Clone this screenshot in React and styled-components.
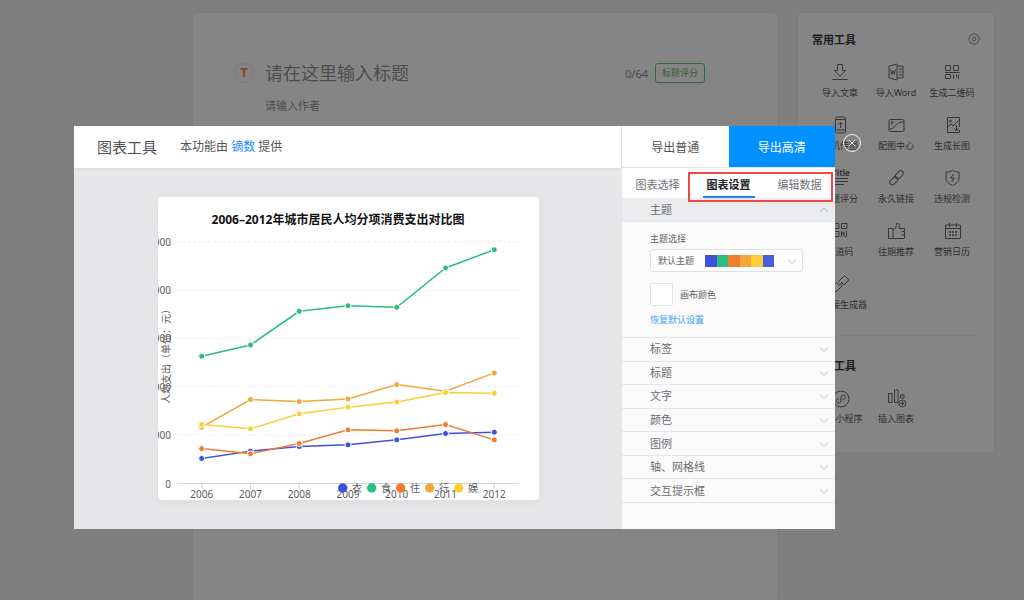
import { useState } from 'react';
import styled, { createGlobalStyle } from 'styled-components';

const GlobalStyle = createGlobalStyle`
  * {
    box-sizing: border-box;
  }

  body {
    margin: 0;
    background: #f3f3f3;
    font-family: 'Noto Sans', 'Noto Sans CJK SC', sans-serif;
    overflow: hidden;
  }

  button, input, select {
    margin: 0;
    padding: 0;
    border: 0;
    background: none;
    font: inherit;
    color: inherit;
  }

  button, select {
    cursor: pointer;
  }
`;

const Page = styled.div`
  display: flex;
  align-items: flex-start;
  gap: 21px;
  min-height: 100vh;
  padding: 13px 30px 0 193px;
`;

const Card = styled.div`
  background: #fff;
  border-radius: 3px;
  box-shadow: 0 0 4px rgba(0, 0, 0, 0.03);
`;

const Editor = styled(Card)`
  flex: 1;
  align-self: stretch;
  padding: 50px 72px 0 41px;
`;

const TitleRow = styled.div`
  display: flex;
  align-items: center;
  height: 20px;
`;

const TitleBadge = styled.div`
  width: 20px;
  height: 20px;
  margin-right: 11px;
  border: 1px solid #eee;
  border-radius: 50%;
  color: #f0a020;
  font: 900 12px/18px Roboto, sans-serif;
  text-align: center;
`;

const TitleInput = styled.input`
  flex: 1;
  min-width: 0;
  height: 28px;
  font-size: 18px;

  &::placeholder {
    color: #969696;
  }
`;

const Count = styled.span`
  margin-right: 7px;
  font-size: 11px;
  color: #8e8e8e;
`;

const ScoreButton = styled.button`
  width: 50px;
  height: 20px;
  border: 1px solid #6fc57c;
  border-radius: 3px;
  color: #5fb86c;
  font-size: 9px;
  line-height: 18px;
`;

const AuthorInput = styled.input`
  display: block;
  height: 20px;
  margin: 12px 0 0 31px;
  font-size: 11px;

  &::placeholder {
    color: #969696;
  }
`;

const Sidebar = styled(Card)`
  width: 196px;
  padding: 13px 14px 19px;
  color: #3c3c3c;
`;

const SidebarHead = styled.div`
  display: flex;
  align-items: center;
  justify-content: space-between;
  height: 28px;
  padding-bottom: 2px;
`;

const SidebarTitle = styled.h2`
  margin: 0;
  font-size: 11px;
  font-weight: 700;
`;

const SettingsButton = styled.button`
  display: flex;
  color: #929292;
`;

const Divider = styled.hr`
  height: 1px;
  margin: 16px 0;
  border: 0;
  background: #f4f4f4;
`;

const ToolGrid = styled.div`
  display: grid;
  grid-template-columns: repeat(3, 1fr);
`;

const ToolButton = styled.button`
  display: flex;
  flex-direction: column;
  align-items: center;
  gap: 5px;
  height: 53px;
  padding-top: 9px;
  font-size: 9px;
  line-height: 14px;
  white-space: nowrap;
  color: #5c5c5c;

  svg {
    color: #6a6a6a;
  }
`;

const Svg = styled.svg`
  display: block;
  flex: none;
  fill: none;
  stroke: currentColor;
  overflow: visible;
`;

const Mask = styled.div`
  position: fixed;
  inset: 0;
  padding: 126px 189px 0 74px;
  background: rgba(0, 0, 0, 0.48);
`;

const Dialog = styled.section`
  position: relative;
  display: flex;
  background: #e7e7e9;
`;

const CloseButton = styled.button`
  position: absolute;
  top: 7px;
  right: -27px;
  color: #f2f2f2;
`;

const Workspace = styled.div`
  flex: 1;
  min-width: 0;
`;

const DialogHead = styled.header`
  display: flex;
  align-items: center;
  gap: 23px;
  height: 42px;
  padding: 0 0 2px 23px;
  background: #fff;
  box-shadow: 0 1px 3px rgba(0, 0, 0, 0.06);
  color: #505459;
`;

const DialogTitle = styled.h1`
  margin: 0;
  font-size: 15px;
  font-weight: 400;
`;

const Provider = styled.p`
  margin: 0;
  font-size: 12px;

  a {
    color: #1a8bff;
    text-decoration: none;
  }
`;

const Stage = styled.div`
  padding: 29px 82px 29px 84px;
`;

const ChartCard = styled.div`
  overflow: hidden;
  background: #fff;
  border-radius: 3px;
  box-shadow: 0 2px 12px rgba(0, 0, 0, 0.05);

  svg {
    display: block;
    width: 100%;
  }
`;

const Panel = styled.aside`
  width: 214px;
  border-left: 1px solid #e4e4e6;
  background: #fafafa;
  color: #606266;
`;

const ExportRow = styled.div`
  display: grid;
  grid-template-columns: 1fr 1fr;
  height: 42px;
  border-bottom: 1px solid #e6e6e8;
  background: #fff;
`;

const ExportButton = styled.button`
  font-size: 12px;
  background: ${({ $primary }) => ($primary ? '#0091ff' : '#fff')};
  color: ${({ $primary }) => ($primary ? '#fff' : '#505459')};
`;

const Tabs = styled.div`
  position: relative;
  display: grid;
  grid-template-columns: repeat(3, 1fr);
  justify-items: center;
  height: 30px;
  background: #fff;
`;

const Tab = styled.button`
  padding: 4px 4px 0;
  border-bottom: 2px solid ${({ $active }) => ($active ? '#1e88f0' : 'transparent')};
  font-size: 11px;
  font-weight: ${({ $active }) => ($active ? 700 : 400)};
  color: ${({ $active }) => ($active ? '#1d2129' : '#707277')};
`;

// red frame drawn over the settings and data tabs
const TabMarker = styled.div`
  position: absolute;
  top: 4px;
  right: 2px;
  z-index: 1;
  width: 145px;
  height: 30px;
  border: 2px solid #f54545;
  pointer-events: none;
`;

const SectionButton = styled.button`
  display: flex;
  flex: 1;
  align-items: center;
  justify-content: space-between;
  width: 100%;
  min-height: 0;
  padding: 0 6px 0 28px;
  border-bottom: 1px solid #e6e7ea;
  font-size: 11px;
  line-height: 16px;
  color: #6a6c70;

  svg {
    color: #b8bcc6;
  }
`;

const OpenSectionButton = styled(SectionButton)`
  height: 24px;
  background: #ebecee;
`;

const SectionBody = styled.div`
  padding: 10px 28px;
  border-bottom: 1px solid #e6e7ea;
  font-size: 9px;
  line-height: 14px;
`;

const FieldLabel = styled.label`
  display: block;
`;

const SelectBox = styled.div`
  position: relative;
  width: 153px;
  height: 23px;
  margin: 3px 0 11px;

  svg {
    position: absolute;
    top: 7px;
    right: 6px;
    color: #b8bcc6;
    pointer-events: none;
  }
`;

const Select = styled.select`
  appearance: none;
  width: 100%;
  height: 100%;
  padding: 0 7px;
  border: 1px solid #dcdfe6;
  border-radius: 3px;
  background: #fff;
`;

const Swatches = styled.div`
  position: absolute;
  top: 6px;
  left: 55px;
  display: flex;
  width: 69px;
  height: 12px;
  pointer-events: none;
`;

const Swatch = styled.span`
  flex: 1;
  background: ${({ $color }) => $color};
`;

const CanvasColor = styled.div`
  display: flex;
  align-items: center;
  gap: 7px;
`;

const ColorInput = styled.input`
  appearance: none;
  width: 23px;
  height: 23px;
  border: 1px solid #e0e3e8;
  border-radius: 2px;
  background: #fff;

  &::-webkit-color-swatch-wrapper {
    padding: 0;
  }

  &::-webkit-color-swatch {
    border: 0;
  }
`;

const ResetLink = styled.a`
  display: block;
  margin-top: 7px;
  color: #409eff;
  text-decoration: none;
`;

const SectionList = styled.div`
  display: flex;
  flex-direction: column;
  height: 165px;
`;

const ChartText = styled.text`
  font-size: 10px;
  fill: #5c5c5c;
`;

const ChartTitle = styled.text`
  font-size: 12px;
  font-weight: 700;
  fill: #111;
`;

const icons = {
  download: (
    <path d="M6.500 1.500h5v6h3L9 13 3.500 7.500h3zM1.500 16.500h15" />
  ),
  word: (
    <>
      <path d="M2 3l8-2v16l-8-2zM10 3h6v12h-6M12 6h3M12 9h3M12 12h3" />
      <path d="M3.500 6.500l1.200 5L6 7.500l1.300 4 1.200-5" />
    </>
  ),
  qr: (
    <path d="M2.500 2.500h5v5h-5zM10.500 2.500h5v5h-5zM2.500 11.500h5v4h-5zM2 9.500h14.500M10.500 11.500v4.500M13.500 11.500v3M15.500 11.500v4.500" />
  ),
  phone: (
    <>
      <rect x="4.500" y="1" width="10" height="16" rx="1.500" />
      <path d="M4.500 3.500h10M4.500 14h10M9.500 12V6.500M7.300 8.500l2.200-2.200 2.200 2.200" />
    </>
  ),
  picture: (
    <>
      <rect x="2" y="3.500" width="15" height="12" rx="1.500" />
      <circle cx="5.200" cy="6.700" r="1.200" />
      <path d="M2 13c3 0 5-1 6.500-3.500S13 6 17 6" />
    </>
  ),
  longPicture: (
    <>
      <path d="M16.500 11V1.500h-12v15h12V14" />
      <circle cx="7.500" cy="5" r="1" />
      <path d="M4.500 11l3.500-3 2 2 5.500-5.500M13.500 9v6M11.500 12.500l2 2.500 2-2.500" />
    </>
  ),
  title: (
    <>
      <text x="10" y="7" fontSize="8" fontWeight="700" textAnchor="middle" fill="currentColor" stroke="none">Title</text>
      <path d="M4 9.500h13M4 12.500h13M4 15.500h9" />
    </>
  ),
  link: (
    <>
      <rect x="-4.700" y="-2.500" width="9.400" height="5" rx="2.500" transform="translate(12.200 5.800) rotate(-45)" />
      <rect x="-4.700" y="-2.500" width="9.400" height="5" rx="2.500" transform="translate(6.800 11.700) rotate(-45)" />
    </>
  ),
  shield: (
    <path d="M9.500 1.200c2 1.400 4 1.800 6.500 1.900v6c0 3.500-3 6-6.500 7.300C6 15.100 3 12.600 3 9.100v-6c2.500-.1 4.500-.5 6.500-1.900zM10.500 5L7.800 9h3.400l-2.400 4" />
  ),
  channel: (
    <path d="M2.500 1.500h5.500v5H2.500zM10.500 1.500h5.500v5h-5.500zM2.500 9.500h5.500v5H2.500zM4.700 4h1M12.700 4h1M4.700 12h1M10.500 15V9.500l2.500 4V9.500M15.500 9v5.500h-2" />
  ),
  thumb: (
    <path d="M1.500 6.500H6v10H1.500zM6 8c2.500-1 3.500-3 3.500-6.500 2.500-1 3.500 1 2.500 5h5.500v10H6M14.500 9.500h3M14.500 13h3M3.500 14v.5" />
  ),
  calendar: (
    <>
      <path d="M2.500 3h15v13.500h-15zM2.500 6.500h15M6.500 1v4M13.500 1v4" />
      <path d="M6 10h2M9 10h2M12 10h2M6 13h2M9 13h2M12 13h2" strokeWidth="1.500" />
    </>
  ),
  linkMaker: (
    <>
      <path d="M8.500 7.500L7.500 6.500l5-5a1.500 1.500 0 0 1 2 0l2.500 2.500a1.500 1.500 0 0 1 0 2l-4 4-2-2" />
      <path d="M10 10l1 1-5 5a1.500 1.500 0 0 1-2 0L1.500 13.500a1.500 1.500 0 0 1 0-2l4-4 2 2M7.500 11l4-4" />
    </>
  ),
  miniProgram: (
    <>
      <circle cx="10" cy="10" r="8" />
      <path d="M8 9.700c-1.800 0-2.700 1-2.700 2.200 0 1.200 1 2.100 2.300 2.100s2.300-1 2.300-2.200V8.200C9.900 7 10.900 6 12.200 6s2.300.9 2.300 2.100c0 1.200-.9 2.200-2.600 2.200" />
    </>
  ),
  insertChart: (
    <>
      <path d="M1.500 4.500H5v9H1.500zM7.500 1H11v12.500H7.500zM13.500 6H17v3h-3.500z" />
      <circle cx="15.500" cy="14.500" r="3.500" />
      <path d="M13.500 14.500h4M15.500 12.500v4" />
    </>
  ),
};

const Icon = ({ name }) => (
  <Svg width="18" height="18" viewBox="0 0 18 18" aria-hidden="true">
    {icons[name]}
  </Svg>
);

const Chevron = ({ up }) => (
  <Svg width="10" height="10" viewBox="0 0 10 10" aria-hidden="true">
    <path d={up ? 'M1 7l4-4 4 4' : 'M1 3.500l4 4 4-4'} />
  </Svg>
);

const commonTools = [
  ['download', '导入文章'],
  ['word', '导入Word'],
  ['qr', '生成二维码'],
  ['phone', '手机传图'],
  ['picture', '配图中心'],
  ['longPicture', '生成长图'],
  ['title', '标题评分'],
  ['link', '永久链接'],
  ['shield', '违规检测'],
  ['channel', '渠道码'],
  ['thumb', '往期推荐'],
  ['calendar', '营销日历'],
  ['linkMaker', '短链接生成器'],
];

const insertTools = [
  ['miniProgram', '插入小程序'],
  ['insertChart', '插入图表'],
];

const themeColors = ['#4051d9', '#29bf7c', '#ef7c2f', '#f1a73b', '#f9d036', '#4a5ddb'];

const years = [2006, 2007, 2008, 2009, 2010, 2011, 2012];

const series = [
  { name: '衣', color: '#4051d9', values: [516, 669, 764, 799, 902, 1032, 1061] },
  { name: '食', color: '#29bf7c', values: [2630, 2863, 3558, 3674, 3641, 4452, 4830] },
  { name: '住', color: '#ef7c2f', values: [722, 613, 826, 1108, 1088, 1218, 902] },
  { name: '行', color: '#f1a73b', values: [1164, 1734, 1692, 1748, 2043, 1907, 2285] },
  { name: '娱', color: '#f9d036', values: [1218, 1129, 1439, 1577, 1686, 1878, 1866] },
];

const sections = ['标签', '标题', '文字', '颜色', '图例', '轴、网格线', '交互提示框'];

const tabs = ['图表选择', '图表设置', '编辑数据'];

const BASE = 286.5;
const xAt = index => 43.7 + index * 48.77;
const yAt = value => BASE - value * 0.0484;

const Chart = () => (
  <svg viewBox="0 0 381 303" role="img" aria-label="消费支出折线图">
    <ChartTitle x="180" y="27" textAnchor="middle">2006–2012年城市居民人均分项消费支出对比图</ChartTitle>
    {[1000, 2000, 3000, 4000, 5000].map(value => (
      <g key={value}>
        <line x1="20" x2="361" y1={yAt(value)} y2={yAt(value)} stroke="#ececec" strokeDasharray="3 2" />
        <ChartText x="13" y={yAt(value) + 4} textAnchor="end">{value.toLocaleString('en-US')}</ChartText>
      </g>
    ))}
    <ChartText x="13" y={BASE + 4} textAnchor="end">0</ChartText>
    <line x1="19" x2="361" y1={BASE} y2={BASE} stroke="#d4d4d4" />
    <ChartText transform="translate(12 207) rotate(-90)">人均支出（单位：元）</ChartText>
    {years.map((year, index) => (
      <g key={year}>
        <line x1={xAt(index)} x2={xAt(index)} y1={BASE} y2={BASE + 5} stroke="#d4d4d4" />
        <ChartText x={xAt(index)} y="301" textAnchor="middle">{year}</ChartText>
      </g>
    ))}
    {series.map(({ name, color, values }) => (
      <g key={name}>
        <polyline
          points={values.map((value, index) => `${xAt(index)},${yAt(value)}`).join(' ')}
          fill="none"
          stroke={color}
          strokeWidth="1.500"
        />
        {values.map((value, index) => (
          <circle key={years[index]} cx={xAt(index)} cy={yAt(value)} r="3" fill={color} stroke="#fff" />
        ))}
      </g>
    ))}
    {series.map(({ name, color }, index) => (
      <g key={name}>
        <circle cx={184.7 + index * 29} cy="291" r="4.700" fill={color} />
        <ChartText x={194 + index * 29} y="295">{name}</ChartText>
      </g>
    ))}
  </svg>
);

const Tools = ({ items }) => (
  <ToolGrid>
    {items.map(([icon, label]) => (
      <ToolButton type="button" key={label}>
        <Icon name={icon} />
        {label}
      </ToolButton>
    ))}
  </ToolGrid>
);

const SettingsPanel = () => {
  const [tab, setTab] = useState('图表设置');
  return (
    <Panel>
      <ExportRow>
        <ExportButton type="button">导出普通</ExportButton>
        <ExportButton type="button" $primary>导出高清</ExportButton>
      </ExportRow>
      <Tabs>
        {tabs.map(name => (
          <Tab type="button" key={name} $active={name === tab} onClick={() => setTab(name)}>{name}</Tab>
        ))}
        <TabMarker />
      </Tabs>
      <OpenSectionButton type="button">
        主题
        <Chevron up />
      </OpenSectionButton>
      <SectionBody>
        <FieldLabel htmlFor="theme">主题选择</FieldLabel>
        <SelectBox>
          <Select id="theme">
            <option>默认主题</option>
          </Select>
          <Swatches>
            {themeColors.map(color => <Swatch key={color} $color={color} />)}
          </Swatches>
          <Chevron />
        </SelectBox>
        <CanvasColor>
          <ColorInput id="canvas-color" type="color" defaultValue="#ffffff" />
          <label htmlFor="canvas-color">画布颜色</label>
        </CanvasColor>
        <ResetLink href="#reset">恢复默认设置</ResetLink>
      </SectionBody>
      <SectionList>
        {sections.map(name => (
          <SectionButton type="button" key={name}>
            {name}
            <Chevron />
          </SectionButton>
        ))}
      </SectionList>
    </Panel>
  );
};

const App = () => (
  <>
    <GlobalStyle />
    <Page>
      <Editor>
        <TitleRow>
          <TitleBadge>T</TitleBadge>
          <TitleInput placeholder="请在这里输入标题" aria-label="标题" />
          <Count>0/64</Count>
          <ScoreButton type="button">标题评分</ScoreButton>
        </TitleRow>
        <AuthorInput placeholder="请输入作者" aria-label="作者" />
      </Editor>
      <Sidebar>
        <SidebarHead>
          <SidebarTitle>常用工具</SidebarTitle>
          <SettingsButton type="button" aria-label="设置">
            <Svg width="12" height="12" viewBox="0 0 12 12">
              <path d="M6 .300l1.600 1.300 2.100.400.700 2L11.400 6l-1 2-.7 2-2.100.400L6 11.700l-1.600-1.300-2.100-.400-.700-2L.600 6l1-2 .7-2 2.100-.400z" strokeLinejoin="round" />
              <circle cx="6" cy="6" r="1.800" />
            </Svg>
          </SettingsButton>
        </SidebarHead>
        <Tools items={commonTools} />
        <Divider />
        <SidebarHead>
          <SidebarTitle>更多工具</SidebarTitle>
        </SidebarHead>
        <Tools items={insertTools} />
      </Sidebar>
    </Page>
    <Mask>
      <Dialog role="dialog" aria-label="图表工具">
        <Workspace>
          <DialogHead>
            <DialogTitle>图表工具</DialogTitle>
            <Provider>
              本功能由 <a href="#dydata">镝数</a> 提供
            </Provider>
          </DialogHead>
          <Stage>
            <ChartCard>
              <Chart />
            </ChartCard>
          </Stage>
        </Workspace>
        <SettingsPanel />
        <CloseButton type="button" aria-label="关闭">
          <Svg width="20" height="20" viewBox="0 0 20 20">
            <circle cx="10" cy="10" r="8.500" />
            <path d="M6.800 6.800l6.400 6.400M13.200 6.800l-6.400 6.400" />
          </Svg>
        </CloseButton>
      </Dialog>
    </Mask>
  </>
);

export default App;
